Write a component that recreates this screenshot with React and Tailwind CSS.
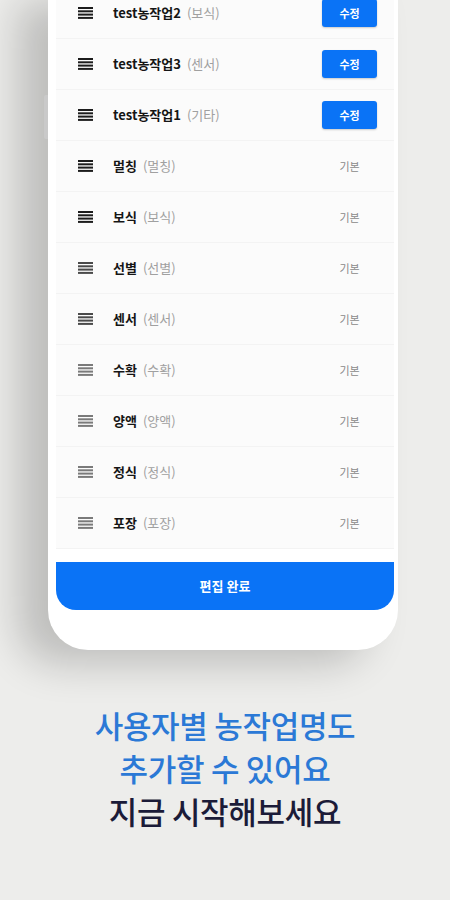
import React from 'react';

const rows = [
  { name: 'test농작업2', sub: '보식', custom: true, tone: 'dark' },
  { name: 'test농작업3', sub: '센서', custom: true, tone: 'dark' },
  { name: 'test농작업1', sub: '기타', custom: true, tone: 'dark' },
  { name: '멀칭', sub: '멀칭', tone: 'dark' },
  { name: '보식', sub: '보식', tone: 'dark' },
  { name: '선별', sub: '선별', tone: 'mid' },
  { name: '센서', sub: '센서', tone: 'mid' },
  { name: '수확', sub: '수확', tone: 'light' },
  { name: '양액', sub: '양액', tone: 'light' },
  { name: '정식', sub: '정식', tone: 'light' },
  { name: '포장', sub: '포장', tone: 'light' },
];

const toneColor = { dark: '#1c1c1c', mid: '#4a4a4a', light: '#7a7a7a' };

const Handle = ({ tone }) => (
  <svg width="15" height="12" viewBox="0 0 15 12" className="shrink-0">
    {[0, 3.3, 6.6, 9.9].map((y) => (
      <rect key={y} x="0" y={y} width="15" height="2" fill={toneColor[tone]} />
    ))}
  </svg>
);

const Row = ({ row }) => {
  return (
    <div className="h-[51px] flex items-center pl-[22px] pr-[17px] bg-[#fbfbfb] border-b border-[#f3f3f3]">
      <Handle tone={row.tone} />
      <div className="ml-[20px] flex-1 flex items-center text-[13px]">
        <span className="font-bold text-[#151515]">{row.name}</span>
        <span className="ml-[6px] text-[#a0a0a0]">({row.sub})</span>
      </div>
      {row.custom ? (
        <button className="w-[55px] h-[28px] rounded-[3px] bg-[#0a73f6] text-white text-[11px] font-bold shadow-[0_1px_2px_rgba(0,0,0,0.2)]">
          수정
        </button>
      ) : (
        <span className="w-[55px] text-center text-[11px] text-[#8a8a8a]">기본</span>
      )}
    </div>
  );
};

export default function App() {
  return (
    <div className="w-[450px] h-[900px] overflow-hidden bg-[#ededeb] font-['Noto_Sans_CJK_KR','Noto_Sans',sans-serif]">
      <div className="relative ml-[48px] w-[350px] -mt-[12px] bg-white rounded-b-[40px] pl-[8px] pr-[4px] pb-[40px] shadow-[-30px_14px_40px_rgba(0,0,0,0.2)]">
        <div className="absolute -left-[4px] top-[107px] w-[4px] h-[44px] bg-[#c9c9c9] rounded-l-[2px]" />
        {rows.map((row) => (
          <Row key={row.name} row={row} />
        ))}
        <div className="mt-[13px] h-[48px] bg-[#0a73f6] rounded-b-[20px] flex items-center justify-center text-white text-[13px] font-bold">
          편집 완료
        </div>
      </div>
      <div className="mt-[53px] text-center text-[31px] leading-[43px] font-medium tracking-[-0.3px]">
        <p className="text-[#2b79d6]">사용자별 농작업명도</p>
        <p className="text-[#2b79d6]">추가할 수 있어요</p>
        <p className="text-[#1b1b38]">지금 시작해보세요</p>
      </div>
    </div>
  );
}
